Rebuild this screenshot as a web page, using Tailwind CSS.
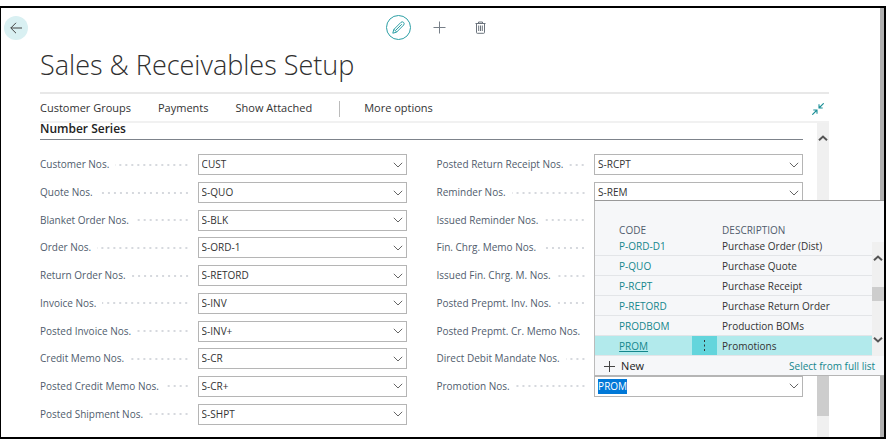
<!DOCTYPE html>
<html lang="en">
<head>
<meta charset="utf-8">
<title>Sales &amp; Receivables Setup</title>
<script src="https://cdn.jsdelivr.net/npm/@tailwindcss/browser@4"></script>
</head>
<body class="bg-white font-['Open_Sans','Noto_Sans',sans-serif] text-[#333]">
<svg class="hidden">
  <symbol id="chev" viewBox="0 0 10 6"><path d="M.8.8 5 5 9.200.8" fill="none" stroke="#666" stroke-width="1"/></symbol>
  <symbol id="up" viewBox="0 0 10 6"><path d="M1 5.200 5 1.500 9 5.200" fill="none" stroke="#555" stroke-width="2"/></symbol>
</svg>
<div class="flex h-screen min-h-[447px] pt-[6px] pr-[2px] pb-[8px]">
<main class="flex min-w-0 flex-1 border-y-2 border-r-2 border-l border-black">
  <div class="flex min-w-0 flex-1 flex-col">
    <header class="grid grid-cols-[24px_1fr] items-center pt-[7px] pl-[3px]">
      <button aria-label="Back" class="flex size-6 items-center justify-center rounded-full bg-[#d9f0f2]">
        <svg class="h-[12px] w-[12px]" viewBox="0 0 12 12" fill="none" stroke="#444" stroke-width="1"><path d="M12 6H.8M6 .8.8 6 6 11.200"/></svg>
      </button>
      <div class="flex items-center justify-center gap-4 pr-[29px]">
        <button aria-label="Edit" class="flex size-[25px] items-center justify-center rounded-full border border-[#2c9fa5]">
          <svg class="size-[13px]" viewBox="0 0 13 13" fill="none" stroke="#2c9fa5" stroke-width="1" stroke-linejoin="round"><path d="M.8 12.200 1.800 8.500 9 1.300Q10.300.3 11.600 1.400 12.700 2.700 11.700 4L4.500 11.200ZM1.800 8.500Q3.800 9 4.500 11.200M3.800 9.200 9.800 3.200"/></svg>
        </button>
        <button aria-label="New" class="flex size-[25px] items-center justify-center">
          <svg class="size-[13px]" viewBox="0 0 13 13" stroke="#777f88" stroke-width="1"><path d="M6.500 0.500v12M0.500 6.500h12"/></svg>
        </button>
        <button aria-label="Delete" class="flex size-[25px] items-center justify-center">
          <svg class="h-[13px] w-[11px]" viewBox="0 0 11 13" fill="none" stroke="#6b737c" stroke-width="1"><path d="M.5 2.500h10M3.500 2.500v-1.500h4v1.500M1.500 2.500v9q0 .8.8.8h6.400q.8 0 .8-.8v-9M3.700 4.500v5.500M5.500 4.500v5.500M7.300 4.500v5.500"/></svg>
        </button>
      </div>
    </header>
    <div class="flex min-h-0 flex-1 flex-col pr-[51px] pl-[39px]">
      <h1 class="mt-[5px] h-[47px] text-[27px] leading-10 font-light text-[#2f2f2f]">Sales &amp; Receivables Setup</h1>
      <nav class="flex h-[31px] items-center border-y-2 border-t-[#e8e8e8] border-b-[#f1f1f1] pt-[2px] text-[11px]">
        <a href="#" class="mr-[27px]">Customer Groups</a>
        <a href="#" class="mr-[27px]">Payments</a>
        <a href="#">Show Attached</a>
        <span class="mr-[24px] ml-[27px] h-4 w-px bg-[#bbb]"></span>
        <a href="#">More options</a>
        <button aria-label="Collapse" class="mr-[5px] ml-auto">
          <svg class="size-3" viewBox="0 0 12 12" fill="none" stroke="#1b8f97" stroke-width="1.100"><path d="M11.700.3 7.500 4.500M7 1.300v3.700H10.700M.3 11.700 4.500 7.500M1.300 7h3.700V10.700"/></svg>
        </button>
      </nav>
      <div class="flex min-h-0 flex-1">
        <form class="flex min-w-0 flex-1 flex-col">
          <h2 class="h-[17px] border-b border-[#7d838b] text-[12px] leading-3 font-semibold text-[#222]">Number Series</h2>
          <div class="mt-[11px] mb-[9px] grid min-h-0 flex-1 grid-flow-col grid-cols-2 grid-rows-10 items-center gap-x-[30px] text-[10px]
            [&_label]:shrink-0 [&_label]:text-[#505c6d]
            [&_i]:mr-[8px] [&_i]:ml-[6px] [&_i]:h-[6px] [&_i]:flex-1 [&_i]:bg-[radial-gradient(circle,#d5d8dd_0.7px,transparent_1px)] [&_i]:bg-[size:6px_6px] [&_i]:bg-right
            [&_p]:relative [&_p]:flex [&_p]:h-[21px] [&_p]:w-[57%] [&_p]:shrink-0 [&_p]:items-center [&_p]:border [&_p]:border-[#b5b5b5] [&_p]:px-[3px]
            [&_input]:min-w-0 [&_input]:flex-1 [&_input]:outline-none [&_p_svg]:h-[6px] [&_p_svg]:w-[10px]">
            <div class="flex items-center"><label for="a1">Customer Nos.</label><i></i><p><input id="a1" value="CUST"><button type="button" aria-label="Choose"><svg><use href="#chev"/></svg></button></p></div>
            <div class="flex items-center"><label for="a2">Quote Nos.</label><i></i><p><input id="a2" value="S-QUO"><button type="button" aria-label="Choose"><svg><use href="#chev"/></svg></button></p></div>
            <div class="flex items-center"><label for="a3">Blanket Order Nos.</label><i></i><p><input id="a3" value="S-BLK"><button type="button" aria-label="Choose"><svg><use href="#chev"/></svg></button></p></div>
            <div class="flex items-center"><label for="a4">Order Nos.</label><i></i><p><input id="a4" value="S-ORD-1"><button type="button" aria-label="Choose"><svg><use href="#chev"/></svg></button></p></div>
            <div class="flex items-center"><label for="a5">Return Order Nos.</label><i></i><p><input id="a5" value="S-RETORD"><button type="button" aria-label="Choose"><svg><use href="#chev"/></svg></button></p></div>
            <div class="flex items-center"><label for="a6">Invoice Nos.</label><i></i><p><input id="a6" value="S-INV"><button type="button" aria-label="Choose"><svg><use href="#chev"/></svg></button></p></div>
            <div class="flex items-center"><label for="a7">Posted Invoice Nos.</label><i></i><p><input id="a7" value="S-INV+"><button type="button" aria-label="Choose"><svg><use href="#chev"/></svg></button></p></div>
            <div class="flex items-center"><label for="a8">Credit Memo Nos.</label><i></i><p><input id="a8" value="S-CR"><button type="button" aria-label="Choose"><svg><use href="#chev"/></svg></button></p></div>
            <div class="flex items-center"><label for="a9">Posted Credit Memo Nos.</label><i></i><p><input id="a9" value="S-CR+"><button type="button" aria-label="Choose"><svg><use href="#chev"/></svg></button></p></div>
            <div class="flex items-center"><label for="a10">Posted Shipment Nos.</label><i></i><p><input id="a10" value="S-SHPT"><button type="button" aria-label="Choose"><svg><use href="#chev"/></svg></button></p></div>
            <div class="flex items-center"><label for="b1">Posted Return Receipt Nos.</label><i></i><p><input id="b1" value="S-RCPT"><button type="button" aria-label="Choose"><svg><use href="#chev"/></svg></button></p></div>
            <div class="flex items-center"><label for="b2">Reminder Nos.</label><i></i><p><input id="b2" value="S-REM"><button type="button" aria-label="Choose"><svg><use href="#chev"/></svg></button></p></div>
            <div class="flex items-center"><label for="b3">Issued Reminder Nos.</label><i></i><p><input id="b3"></p></div>
            <div class="flex items-center"><label for="b4">Fin. Chrg. Memo Nos.</label><i></i><p><input id="b4"></p></div>
            <div class="flex items-center"><label for="b5">Issued Fin. Chrg. M. Nos.</label><i></i><p><input id="b5"></p></div>
            <div class="flex items-center"><label for="b6">Posted Prepmt. Inv. Nos.</label><i></i><p><input id="b6"></p></div>
            <div class="flex items-center"><label for="b7">Posted Prepmt. Cr. Memo Nos.</label><i></i><p><input id="b7"></p></div>
            <div class="flex items-center"><label for="b8">Direct Debit Mandate Nos.</label><i></i><p><input id="b8"></p></div>
            <div class="relative flex items-center"><label for="b9">Promotion Nos.</label><i></i><p><input id="b9" value="PROM" class="selection:bg-[#0078d7] selection:text-white"><button type="button" aria-label="Choose"><svg><use href="#chev"/></svg></button></p>
              <div class="absolute bottom-full left-[43%] z-10 flex h-[176px] w-[290px] flex-col border-y border-l border-t-[#999] border-b-[#b5b5b5] border-l-[#bbb] bg-[#f6f7f9]">
                <div class="flex flex-1">
                  <table class="mt-[24px] w-[277px] table-fixed text-left leading-[18px] [&_a]:text-[#14868c] [&_tbody_tr]:h-5 [&_tbody_tr]:border-b [&_tbody_tr]:border-[#e3e5e8] [&_td:first-child]:pl-6 [&_td:last-child]:pl-[5px]">
                    <thead><tr class="h-[11px] text-[#505c6d]"><th class="w-[97px] pl-6 leading-[11px] font-normal">CODE</th><th class="w-[25px]"></th><th class="pl-[5px] leading-[11px] font-normal">DESCRIPTION</th></tr></thead>
                    <tbody>
                      <tr><td><a href="#">P-ORD-D1</a></td><td></td><td>Purchase Order (Dist)</td></tr>
                      <tr><td><a href="#">P-QUO</a></td><td></td><td>Purchase Quote</td></tr>
                      <tr><td><a href="#">P-RCPT</a></td><td></td><td>Purchase Receipt</td></tr>
                      <tr><td><a href="#">P-RETORD</a></td><td></td><td>Purchase Return Order</td></tr>
                      <tr><td><a href="#">PRODBOM</a></td><td></td><td>Production BOMs</td></tr>
                      <tr class="bg-[#b2eaec]"><td><a href="#" class="underline">PROM</a></td><td class="bg-[#63d5dc] text-center"><svg class="mx-auto h-[11px] w-[3px]" viewBox="0 0 3 11" fill="#333"><path d="M1 0h1v2H1zM1 4.500h1v2H1zM1 9h1v2H1z"/></svg></td><td>Promotions</td></tr>
                    </tbody>
                  </table>
                  <div class="mt-[41px] flex flex-1 flex-col items-center bg-[#f0f0f0] py-[13px]">
                    <svg class="h-[6px] w-[10px]"><use href="#up"/></svg>
                    <span class="mt-[26px] h-[14px] w-full bg-[#cdcdcd]"></span>
                    <svg class="mt-auto h-[6px] w-[10px] rotate-180"><use href="#up"/></svg>
                  </div>
                </div>
                <div class="flex h-[19px] items-center justify-between px-[9px] pt-[2px]">
                  <button type="button" class="flex items-center gap-[6px] text-[11px] text-[#222]"><svg class="size-[11px]" viewBox="0 0 11 11" stroke="#444"><path d="M5.500 0v11M0 5.500h11"/></svg>New</button>
                  <a href="#" class="text-[#14868c]">Select from full list</a>
                </div>
              </div>
            </div>
          </div>
        </form>
        <div class="ml-[14px] flex w-3 flex-col items-center justify-between bg-[#f0f0f0] pt-[12px] pb-[21px]">
          <svg class="h-[6px] w-[10px]"><use href="#up"/></svg>
          <span class="h-[120px] w-full bg-[#cdcdcd]"></span>
        </div>
      </div>
    </div>
  </div>
  <div class="w-1 bg-[#b0b0b0]"></div>
</main>
</div>
<script>
  const field = document.getElementById('b9');
  field.focus();
  field.select();
</script>
</body>
</html>
